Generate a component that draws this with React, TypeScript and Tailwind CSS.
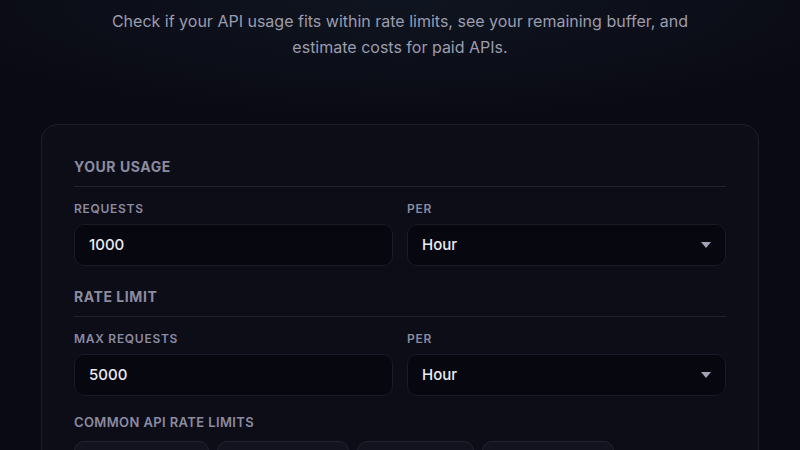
import React from "react";

const presets = [
  { name: "GitHub (5,000/hr)", w: "w-[135px]" },
  { name: "Twitter (300/15m)", w: "w-[132px]" },
  { name: "Stripe (100/sec)", w: "w-[117px]" },
  { name: "OpenAI (500/min)", w: "w-[132px]" },
];

function Field({ label, value }: { label: string; value: string }) {
  return (
    <div className="flex flex-col">
      <label className="text-[12px] font-semibold uppercase tracking-[0.06em] text-[#8b8ba0] leading-4 mb-[7px]">
        {label}
      </label>
      <div className="h-[42px] rounded-[10px] bg-[#07070f] border border-[#1a1a28] px-[14px] flex items-center text-[15px] font-medium text-[#ececf4]">
        {value}
      </div>
    </div>
  );
}

function SelectField({ label, value }: { label: string; value: string }) {
  return (
    <div className="flex flex-col">
      <label className="text-[12px] font-semibold uppercase tracking-[0.06em] text-[#8b8ba0] leading-4 mb-[7px]">
        {label}
      </label>
      <div className="h-[42px] rounded-[10px] bg-[#07070f] border border-[#1a1a28] px-[14px] flex items-center justify-between text-[15px] font-medium text-[#ececf4]">
        <span>{value}</span>
        <svg width="10" height="6" viewBox="0 0 10 6">
          <path d="M0 0 L10 0 L5 6 Z" fill="#a3a3b8" />
        </svg>
      </div>
    </div>
  );
}

function SectionTitle({ children }: { children: React.ReactNode }) {
  return (
    <div className="border-b border-[#20202e] pb-[9px] mb-[14px]">
      <h2 className="text-[14px] font-bold uppercase tracking-[0.04em] text-[#8b8ba0] leading-5">
        {children}
      </h2>
    </div>
  );
}

export default function App() {
  return (
    <div
      className="h-[450px] w-full overflow-hidden bg-[#0a0a14] text-white"
      style={{ fontFamily: "Inter, 'Noto Sans', sans-serif" }}
    >
      <div className="h-full bg-[radial-gradient(ellipse_500px_120px_at_50%_0%,#0f1520,transparent)]">
        <p className="pt-[8px] text-center text-[16px] leading-[26px] text-[#9c9cae] max-w-[600px] mx-auto">
          Check if your API usage fits within rate limits, see your remaining
          buffer, and estimate costs for paid APIs.
        </p>

        <div className="mx-[41px] mt-[64px] rounded-[16px] border border-[#1d1d2c] bg-[#0d0d18] px-[32px] pt-[32px] pb-8">
          <SectionTitle>Your Usage</SectionTitle>
          <div className="grid grid-cols-2 gap-[14px]">
            <Field label="Requests" value="1000" />
            <SelectField label="Per" value="Hour" />
          </div>

          <div className="mt-[21px]">
            <SectionTitle>Rate Limit</SectionTitle>
            <div className="grid grid-cols-2 gap-[14px]">
              <Field label="Max Requests" value="5000" />
              <SelectField label="Per" value="Hour" />
            </div>
          </div>

          <div className="mt-[16px]">
            <div className="text-[13px] font-semibold uppercase tracking-[0.03em] text-[#8b8ba0] leading-5 mb-[9px]">
              Common API Rate Limits
            </div>
            <div className="flex gap-[8px]">
              {presets.map((p) => (
                <button
                  key={p.name}
                  className={`${p.w} h-[34px] rounded-[10px] border border-[#22222f] bg-[#13131f] text-[12px] text-[#b8b8c8] whitespace-nowrap`}
                >
                  {p.name}
                </button>
              ))}
            </div>
          </div>
        </div>
      </div>
    </div>
  );
}
